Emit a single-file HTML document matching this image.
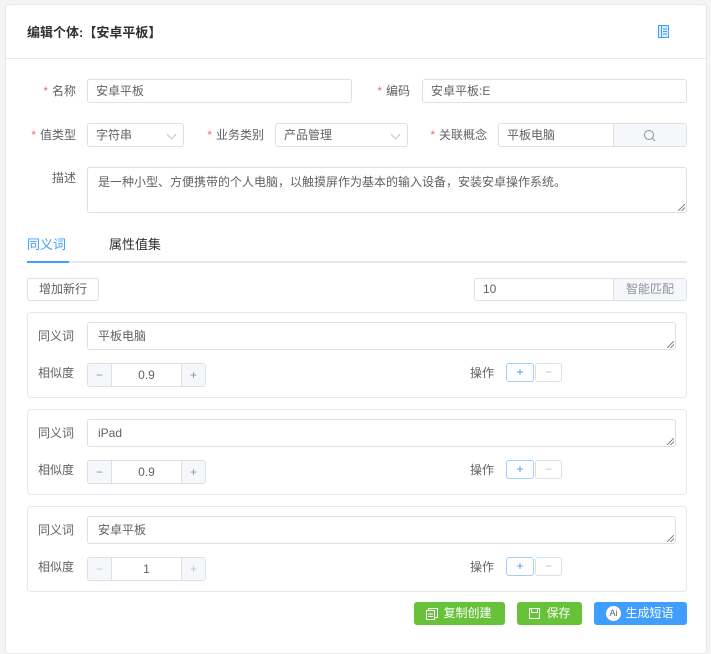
<!DOCTYPE html>
<html><head><meta charset="utf-8"><style>
*{box-sizing:border-box;margin:0;padding:0}
body{width:711px;height:643px;background:#f4f4f5;font-family:"Liberation Sans","Noto Sans CJK SC",sans-serif;font-size:12px;color:#606266;position:relative;overflow:hidden}
.a{position:absolute}
.card{left:5px;top:4px;width:702px;height:650px;background:#fff;border:1px solid #e4e7ed;border-radius:4px}
.inp{position:absolute;height:24px;border:1px solid #dcdfe6;border-radius:3px;background:#fff;padding-left:8px;line-height:22px;color:#606266;font-size:12px}
.lbl{position:absolute;text-align:right;line-height:24px;font-size:12px;color:#606266}
.req{color:#f56c6c;margin-right:4px}
.arrow{position:absolute;right:8px;top:7px;width:7px;height:7px;border-right:1px solid #c0c4cc;border-bottom:1px solid #c0c4cc;transform:rotate(45deg)}
.sub{position:absolute;left:27px;width:660px;height:86px;border:1px solid #e4e7ed;border-radius:4px}
.grip{position:absolute;right:1px;bottom:1px;width:7px;height:7px;background:linear-gradient(135deg,transparent 45%,#888 46%,#888 54%,transparent 55%,transparent 70%,#888 71%,#888 79%,transparent 80%)}
.btn{position:absolute;height:23px;border-radius:3px;color:#fff;font-size:12px;line-height:23px;text-align:center}
</style></head><body>
<div class="a card"></div>
<div class="a" style="left:5px;top:58px;width:702px;height:1px;background:#e4e7ed"></div>
<div class="a" style="left:27px;top:22px;font-size:13px;font-weight:bold;color:#303133">编辑个体:【安卓平板】</div>
<svg class="a" style="left:658px;top:25px" width="11" height="13" viewBox="0 0 11 13"><rect x="0.5" y="0.5" width="10" height="12" fill="#d9ecff" stroke="#409eff"/><line x1="3.5" y1="1" x2="3.5" y2="12" stroke="#409eff"/><line x1="5" y1="4" x2="9" y2="4" stroke="#409eff"/><line x1="5" y1="6.5" x2="9" y2="6.5" stroke="#409eff"/><line x1="5" y1="9" x2="9" y2="9" stroke="#409eff"/></svg>

<div class="lbl" style="left:20px;width:56px;top:79px"><span class="req">*</span>名称</div>
<div class="inp" style="left:87px;top:79px;width:265px">安卓平板</div>
<div class="lbl" style="left:350px;width:60px;top:79px"><span class="req">*</span>编码</div>
<div class="inp" style="left:422px;top:79px;width:265px">安卓平板:E</div>

<div class="lbl" style="left:20px;width:56px;top:123px"><span class="req">*</span>值类型</div>
<div class="inp" style="left:87px;top:123px;width:97px">字符串<i class="arrow"></i></div>
<div class="lbl" style="left:195px;width:69px;top:123px"><span class="req">*</span>业务类别</div>
<div class="inp" style="left:275px;top:123px;width:133px">产品管理<i class="arrow"></i></div>
<div class="lbl" style="left:415px;width:72px;top:123px"><span class="req">*</span>关联概念</div>
<div class="inp" style="left:498px;top:123px;width:189px">平板电脑
<div class="a" style="right:0;top:0;width:73px;height:22px;background:#f5f7fa;border-left:1px solid #dcdfe6"><svg class="a" style="left:29px;top:5px" width="13" height="13"><circle cx="6" cy="6" r="4.5" fill="none" stroke="#909399"/><line x1="9.3" y1="9.3" x2="12" y2="12" stroke="#909399"/></svg></div></div>

<div class="lbl" style="left:20px;width:56px;top:170px;line-height:16px">描述</div>
<div class="inp" style="left:87px;top:167px;width:600px;height:46px;line-height:16px;padding-top:6px;padding-left:10px">是一种小型、方便携带的个人电脑，以触摸屏作为基本的输入设备，安装安卓操作系统。<i class="grip"></i></div>

<div class="a" style="left:27px;top:234px;font-size:13px;color:#409eff">同义词</div>
<div class="a" style="left:109px;top:234px;font-size:13px;color:#303133">属性值集</div>
<div class="a" style="left:27px;top:261px;width:660px;height:2px;background:#e4e7ed"></div>
<div class="a" style="left:27px;top:261px;width:42px;height:2px;background:#409eff"></div>

<div class="inp" style="left:27px;top:278px;width:72px;height:23px;line-height:21px;padding:0;text-align:center">增加新行</div>
<div class="inp" style="left:474px;top:278px;width:213px;height:23px;line-height:21px">10<div class="a" style="right:0;top:0;width:73px;height:21px;background:#f5f7fa;border-left:1px solid #dcdfe6;text-align:center;color:#909399">智能匹配</div></div>

<div class="sub" style="top:312px"></div>
<div class="sub" style="top:409px"></div>
<div class="sub" style="top:506px"></div>

<!-- card 1 -->
<div class="a" style="left:38px;top:327px">同义词</div>
<div class="inp" style="left:87px;top:322px;width:589px;height:28px;line-height:26px;padding-left:10px">平板电脑<i class="grip"></i></div>
<div class="a" style="left:38px;top:364px">相似度</div>
<div class="inp" style="left:87px;top:363px;width:119px;padding:0;text-align:center;color:#606266">0.9<div class="a" style="left:0;top:0;width:24px;height:22px;background:#f5f7fa;border-right:1px solid #dcdfe6;color:#909399">−</div><div class="a" style="right:0;top:0;width:24px;height:22px;background:#f5f7fa;border-left:1px solid #dcdfe6;color:#909399">+</div></div>
<div class="a" style="left:470px;top:364px">操作</div>
<div class="inp" style="left:506px;top:363px;width:28px;height:19px;padding:0;line-height:16px;text-align:center;border-color:#a0cfff;color:#409eff">+</div>
<div class="inp" style="left:535px;top:363px;width:27px;height:19px;padding:0;line-height:16px;text-align:center;color:#c0c4cc">−</div>

<!-- card 2 -->
<div class="a" style="left:38px;top:424px">同义词</div>
<div class="inp" style="left:87px;top:419px;width:589px;height:28px;line-height:26px;padding-left:10px">iPad<i class="grip"></i></div>
<div class="a" style="left:38px;top:461px">相似度</div>
<div class="inp" style="left:87px;top:460px;width:119px;padding:0;text-align:center">0.9<div class="a" style="left:0;top:0;width:24px;height:22px;background:#f5f7fa;border-right:1px solid #dcdfe6;color:#909399">−</div><div class="a" style="right:0;top:0;width:24px;height:22px;background:#f5f7fa;border-left:1px solid #dcdfe6;color:#909399">+</div></div>
<div class="a" style="left:470px;top:461px">操作</div>
<div class="inp" style="left:506px;top:460px;width:28px;height:19px;padding:0;line-height:16px;text-align:center;border-color:#a0cfff;color:#409eff">+</div>
<div class="inp" style="left:535px;top:460px;width:27px;height:19px;padding:0;line-height:16px;text-align:center;color:#c0c4cc">−</div>

<!-- card 3 -->
<div class="a" style="left:38px;top:521px">同义词</div>
<div class="inp" style="left:87px;top:516px;width:589px;height:28px;line-height:26px;padding-left:10px">安卓平板<i class="grip"></i></div>
<div class="a" style="left:38px;top:558px">相似度</div>
<div class="inp" style="left:87px;top:557px;width:119px;padding:0;text-align:center">1<div class="a" style="left:0;top:0;width:24px;height:22px;background:#f5f7fa;border-right:1px solid #dcdfe6;color:#c0c4cc">−</div><div class="a" style="right:0;top:0;width:24px;height:22px;background:#f5f7fa;border-left:1px solid #dcdfe6;color:#c0c4cc">+</div></div>
<div class="a" style="left:470px;top:558px">操作</div>
<div class="inp" style="left:506px;top:557px;width:28px;height:19px;padding:0;line-height:16px;text-align:center;border-color:#a0cfff;color:#409eff">+</div>
<div class="inp" style="left:535px;top:557px;width:27px;height:19px;padding:0;line-height:16px;text-align:center;color:#c0c4cc">−</div>

<!-- bottom buttons -->
<div class="btn" style="left:414px;top:602px;width:91px;background:#67c23a;padding-left:16px">复制创建
<svg class="a" style="left:12px;top:6px" width="12" height="12"><rect x="0.5" y="2.5" width="8" height="9" fill="none" stroke="#fff"/><path d="M2.5 2.5V0.5h9v9h-3" fill="none" stroke="#fff"/><line x1="2" y1="6" x2="7" y2="6" stroke="#fff"/><line x1="2" y1="8.5" x2="7" y2="8.5" stroke="#fff"/></svg></div>
<div class="btn" style="left:517px;top:602px;width:65px;background:#67c23a;padding-left:18px">保存
<svg class="a" style="left:12px;top:6px" width="11" height="11"><rect x="0.5" y="0.5" width="10" height="10" fill="none" stroke="#fff"/><rect x="2.5" y="0.5" width="6" height="4" fill="none" stroke="#fff"/></svg></div>
<div class="btn" style="left:594px;top:602px;width:93px;background:#409eff;padding-left:18px">生成短语
<div class="a" style="left:12px;top:4px;width:15px;height:15px;border-radius:50%;background:#fff;color:#606266;font-size:9px;line-height:15px;text-align:center">Ai</div></div>
</body></html>
